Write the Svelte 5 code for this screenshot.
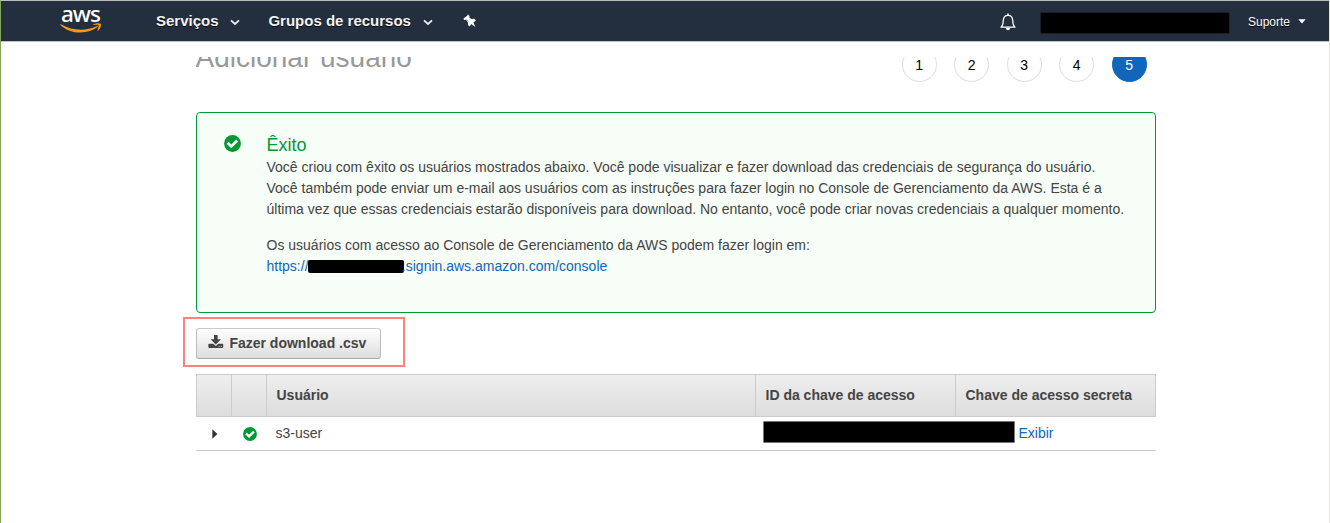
<script>
  const steps = [1, 2, 3, 4, 5];
  const current = 5;
  const columns = ['', '', 'Usuário', 'ID da chave de acesso', 'Chave de acesso secreta'];
</script>

{#snippet check(size)}
  <svg width={size} height={size} viewBox="0 0 17 17">
    <circle cx="8.5" cy="8.5" r="8.4" fill="#009933" />
    <path d="M3.6 7.8 L7.3 11.4 L13.3 5.6" fill="none" stroke="#fff" stroke-width="2.8" />
  </svg>
{/snippet}

{#snippet chevron()}
  <svg class="chevron" width="10" height="7" viewBox="0 0 10 7">
    <path d="M1 1.3 L5 5 L9 1.3" fill="none" stroke="#eee" stroke-width="1.8" />
  </svg>
{/snippet}

<div class="page">
  <nav>
    <div class="logo">
      <span>aws</span>
      <svg width="42" height="11" viewBox="0 0 42 11">
        <path d="M.4 1.9 Q.1 1 1 1.3 C13 8.3 26 8.1 36.8 3.2 Q38.4 2.7 37.6 4.1 C28 11.8 10 11.5 .4 1.9Z" fill="#f79a1c" />
        <path d="M33.2 1.5 C35 .1 39.5 -.2 40.7 .7 C41.5 2 40.4 6 38 7.7 Q37.1 8.2 37.4 7.2 C38.1 5.5 39.1 3 38.6 2.2 C37.8 1.5 35.5 1.9 33.8 2.1 Q32.8 2.1 33.2 1.5Z" fill="#f79a1c" />
      </svg>
    </div>
    <span class="menu services">Serviços {@render chevron()}</span>
    <span class="menu groups">Grupos de recursos {@render chevron()}</span>
    <svg class="pin" width="14" height="14" viewBox="0 0 14 14">
      <path d="M4.8 .2 L6.6 2.2 L6.3 3.4 L8.9 5.2 L11 4.6 L12.9 6.5 L10.4 8.4 L12.4 12.9 L8.2 9.9 L6.8 12.4 L5.2 11.3 L4.8 8.3 L3 5.8 L1 5.9 L.5 4.5 L4.3 1.8Z" fill="#fff" />
      <path d="M3.3 5.4 L5.3 7.7" stroke="#7c858f" stroke-width=".8" />
    </svg>
    <svg class="bell" width="16" height="18" viewBox="0 0 16 18">
      <path d="M1 14.2 C3 12.5 3.1 10.5 3.3 7.3 C3.5 4.3 5 2.3 8 2.3 C11 2.3 12.5 4.3 12.7 7.3 C12.9 10.5 13 12.5 15 14.2Z" fill="none" stroke="#fff" stroke-width="1.3" stroke-linejoin="round" />
      <path d="M8 .6 V2.5" stroke="#fff" stroke-width="1.5" />
      <path d="M5.7 14.7 H10.3 Q9.8 17.2 8 17.2 Q6.2 17.2 5.7 14.7Z" fill="#fff" />
    </svg>
    <span class="account"></span>
    <span class="support">Suporte
      <svg width="8" height="5" viewBox="0 0 8 5"><path d="M.3 .3 H7.7 L4 4.6Z" fill="#fff" /></svg>
    </span>
  </nav>

  <main>
    <header>
      <h1>Adicionar usuário</h1>
      <ol>
        {#each steps as step}
          <li class:active={step === current}>{step}</li>
        {/each}
      </ol>
    </header>

    <section class="notice">
      {@render check(17)}
      <div>
        <h2>Êxito</h2>
        <p>Você criou com êxito os usuários mostrados abaixo. Você pode visualizar e fazer download das credenciais de segurança do usuário.<br />Você também pode enviar um e-mail aos usuários com as instruções para fazer login no Console de Gerenciamento da AWS. Esta é a<br />última vez que essas credenciais estarão disponíveis para download. No entanto, você pode criar novas credenciais a qualquer momento.</p>
        <p>Os usuários com acesso ao Console de Gerenciamento da AWS podem fazer login em:<br /><a class="url" href="#console">https://<span class="redacted"></span>.signin.aws.amazon.com/console</a></p>
      </div>
    </section>

    <div class="highlight">
      <button>
        <svg width="16" height="14" viewBox="0 0 16 14">
          <path d="M1.2 8.7 H14.4 Q15.2 8.7 15.2 9.5 V12.3 Q15.2 13 14.4 13 H1.2 Q.4 13 .4 12.3 V9.5 Q.4 8.7 1.2 8.7Z" fill="#444" />
          <path d="M3.6 7.2 L7.8 11 L12 7.2Z" fill="#eee" />
          <path d="M6 0 H9.6 V4.2 H13 L7.8 9.4 L2.6 4.2 H6Z" fill="#444" />
          <path d="M10.6 11.4 H11.6 M12.8 11.4 H13.8" stroke="#ddd" />
        </svg>
        Fazer download .csv
      </button>
    </div>

    <div class="table">
      <div class="row head">
        {#each columns as column}<span>{column}</span>{/each}
      </div>
      <div class="row body">
        <span class="expand"><svg width="6" height="10" viewBox="0 0 6 10"><path d="M.3 .2 L5.5 5 L.3 9.8Z" fill="#333" /></svg></span>
        <span class="status">{@render check(14)}</span>
        <span class="user">s3-user</span>
        <span class="secret"><i></i><a href="#exibir">Exibir</a></span>
      </div>
    </div>
  </main>
</div>

<style>
  :global(body) { background: #fff; overflow: hidden; }
  * { box-sizing: border-box; }
  .page {
    height: 523px;
    border: 1px solid #b8bfb9;
    border-left-color: #84a65a;
    border-right-color: #e6e6de;
    border-bottom: 0;
    font: 14px/21px "Liberation Sans", Arial, sans-serif;
    color: #444;
  }
  nav {
    display: flex;
    height: 41px;
    background: #232f3e;
    border-bottom: 1px solid #bfc4c9;
    color: #fff;
  }
  nav svg { flex: none; }
  .logo { width: 42px; margin-left: 59px; display: flex; flex-direction: column; }
  .logo span {
    height: 22px;
    padding-left: 1px;
    font: 500 22.5px/25px "Noto Sans", "Open Sans", sans-serif;
    letter-spacing: -1px;
  }
  .menu {
    font-size: 15px;
    font-weight: bold;
    line-height: 39px;
    color: #f3f3f3;
    text-shadow: 0 1px 0 #000;
    white-space: nowrap;
  }
  .services { margin-left: 54px; width: 112.4px; }
  .groups { width: 193px; }
  .chevron { margin: 0 0 0 7.4px; }
  .pin { margin: 13px 0 0 2px; }
  .bell { margin: 12px 0 0 522.6px; }
  .account { width: 190px; height: 22px; margin: 11px 0 0 24px; background: #000; border: 1px solid #17202b; border-radius: 2px; }
  .support { margin-left: 18px; font-size: 12px; line-height: 43px; text-shadow: 0 1px 0 #000; white-space: nowrap; }
  .support svg { margin: 0 0 2px 5px; }
  main { width: 960px; margin: 15px 0 0 195px; }
  header { display: flex; justify-content: space-between; align-items: flex-end; height: 25px; overflow: hidden; }
  h1 { margin: 0 0 5px -.5px; font-size: 28px; font-weight: normal; line-height: 38px; color: #999; }
  ol { display: flex; gap: 17.5px; margin: 0 9.3px 0 0; padding: 0; list-style: none; }
  li {
    width: 35px;
    height: 35px;
    border: 1px solid #ddd;
    border-radius: 50%;
    text-align: center;
    line-height: 34px;
    color: #000;
  }
  li.active { background: #1166bb; border-color: #1166bb; color: #fff; }
  .notice {
    display: grid;
    grid-template-columns: 42px 1fr;
    height: 201px;
    margin-top: 30px;
    padding: 22px 0 0 27.5px;
    background: #f7fdf7;
    border: 1px solid #009933;
    border-radius: 4px;
  }
  .notice > :global(svg) { margin: .4px 0 0 -.4px; }
  h2 { margin: 0 0 1px; font-size: 18px; line-height: 21px; font-weight: normal; color: #009933; }
  p { margin: 0 0 15px; white-space: nowrap; }
  a { color: #1166bb; text-decoration: none; }
  .redacted { display: inline-block; width: 96px; height: 13px; margin: 0 -2.5px -2px -.2px; background: #000; border-radius: 2px; }
  .highlight {
    width: 222px;
    height: 50px;
    margin: 4px 0 0 -13px;
    padding: 9px 11px;
    border: 2px solid #ff8080;
  }
  button {
    display: flex;
    align-items: center;
    width: 185px;
    height: 31px;
    padding: 0 0 0 11.4px;
    border: 1px solid #bbb;
    border-top-color: #ccc;
    border-bottom-color: #aaa;
    border-radius: 3px;
    background: linear-gradient(#fff, #ddd);
    font: bold 14px/21px "Liberation Sans", Arial, sans-serif;
    color: #444;
    white-space: nowrap;
  }
  button svg { margin: -4px 5px 0 0; }
  .table { margin-top: 7px; }
  .row { display: grid; grid-template-columns: 35px 35px 489px 200px 201px; }
  .head { height: 43px; border: 1px solid #ccc; border-left: 0; background: linear-gradient(#eee, #ddd); font-weight: bold; line-height: 41px; }
  .head span { border-left: 1px solid #ccc; padding-left: 9.5px; white-space: nowrap; }
  .body { height: 34px; border-bottom: 1px solid #ccc; line-height: 33px; }
  .expand, .status { display: flex; align-items: center; }
  .expand { padding: 0 0 0 16px; }
  .status { padding: 1px 0 0 12px; }
  .user { padding-left: 9.5px; }
  .secret { display: flex; align-items: flex-start; grid-column: span 2; padding-left: 8px; }
  .secret i { width: 252px; height: 22px; margin: 4px 3.5px 0 0; background: #000; border: 1px solid #777; border-radius: 1px; }
</style>
